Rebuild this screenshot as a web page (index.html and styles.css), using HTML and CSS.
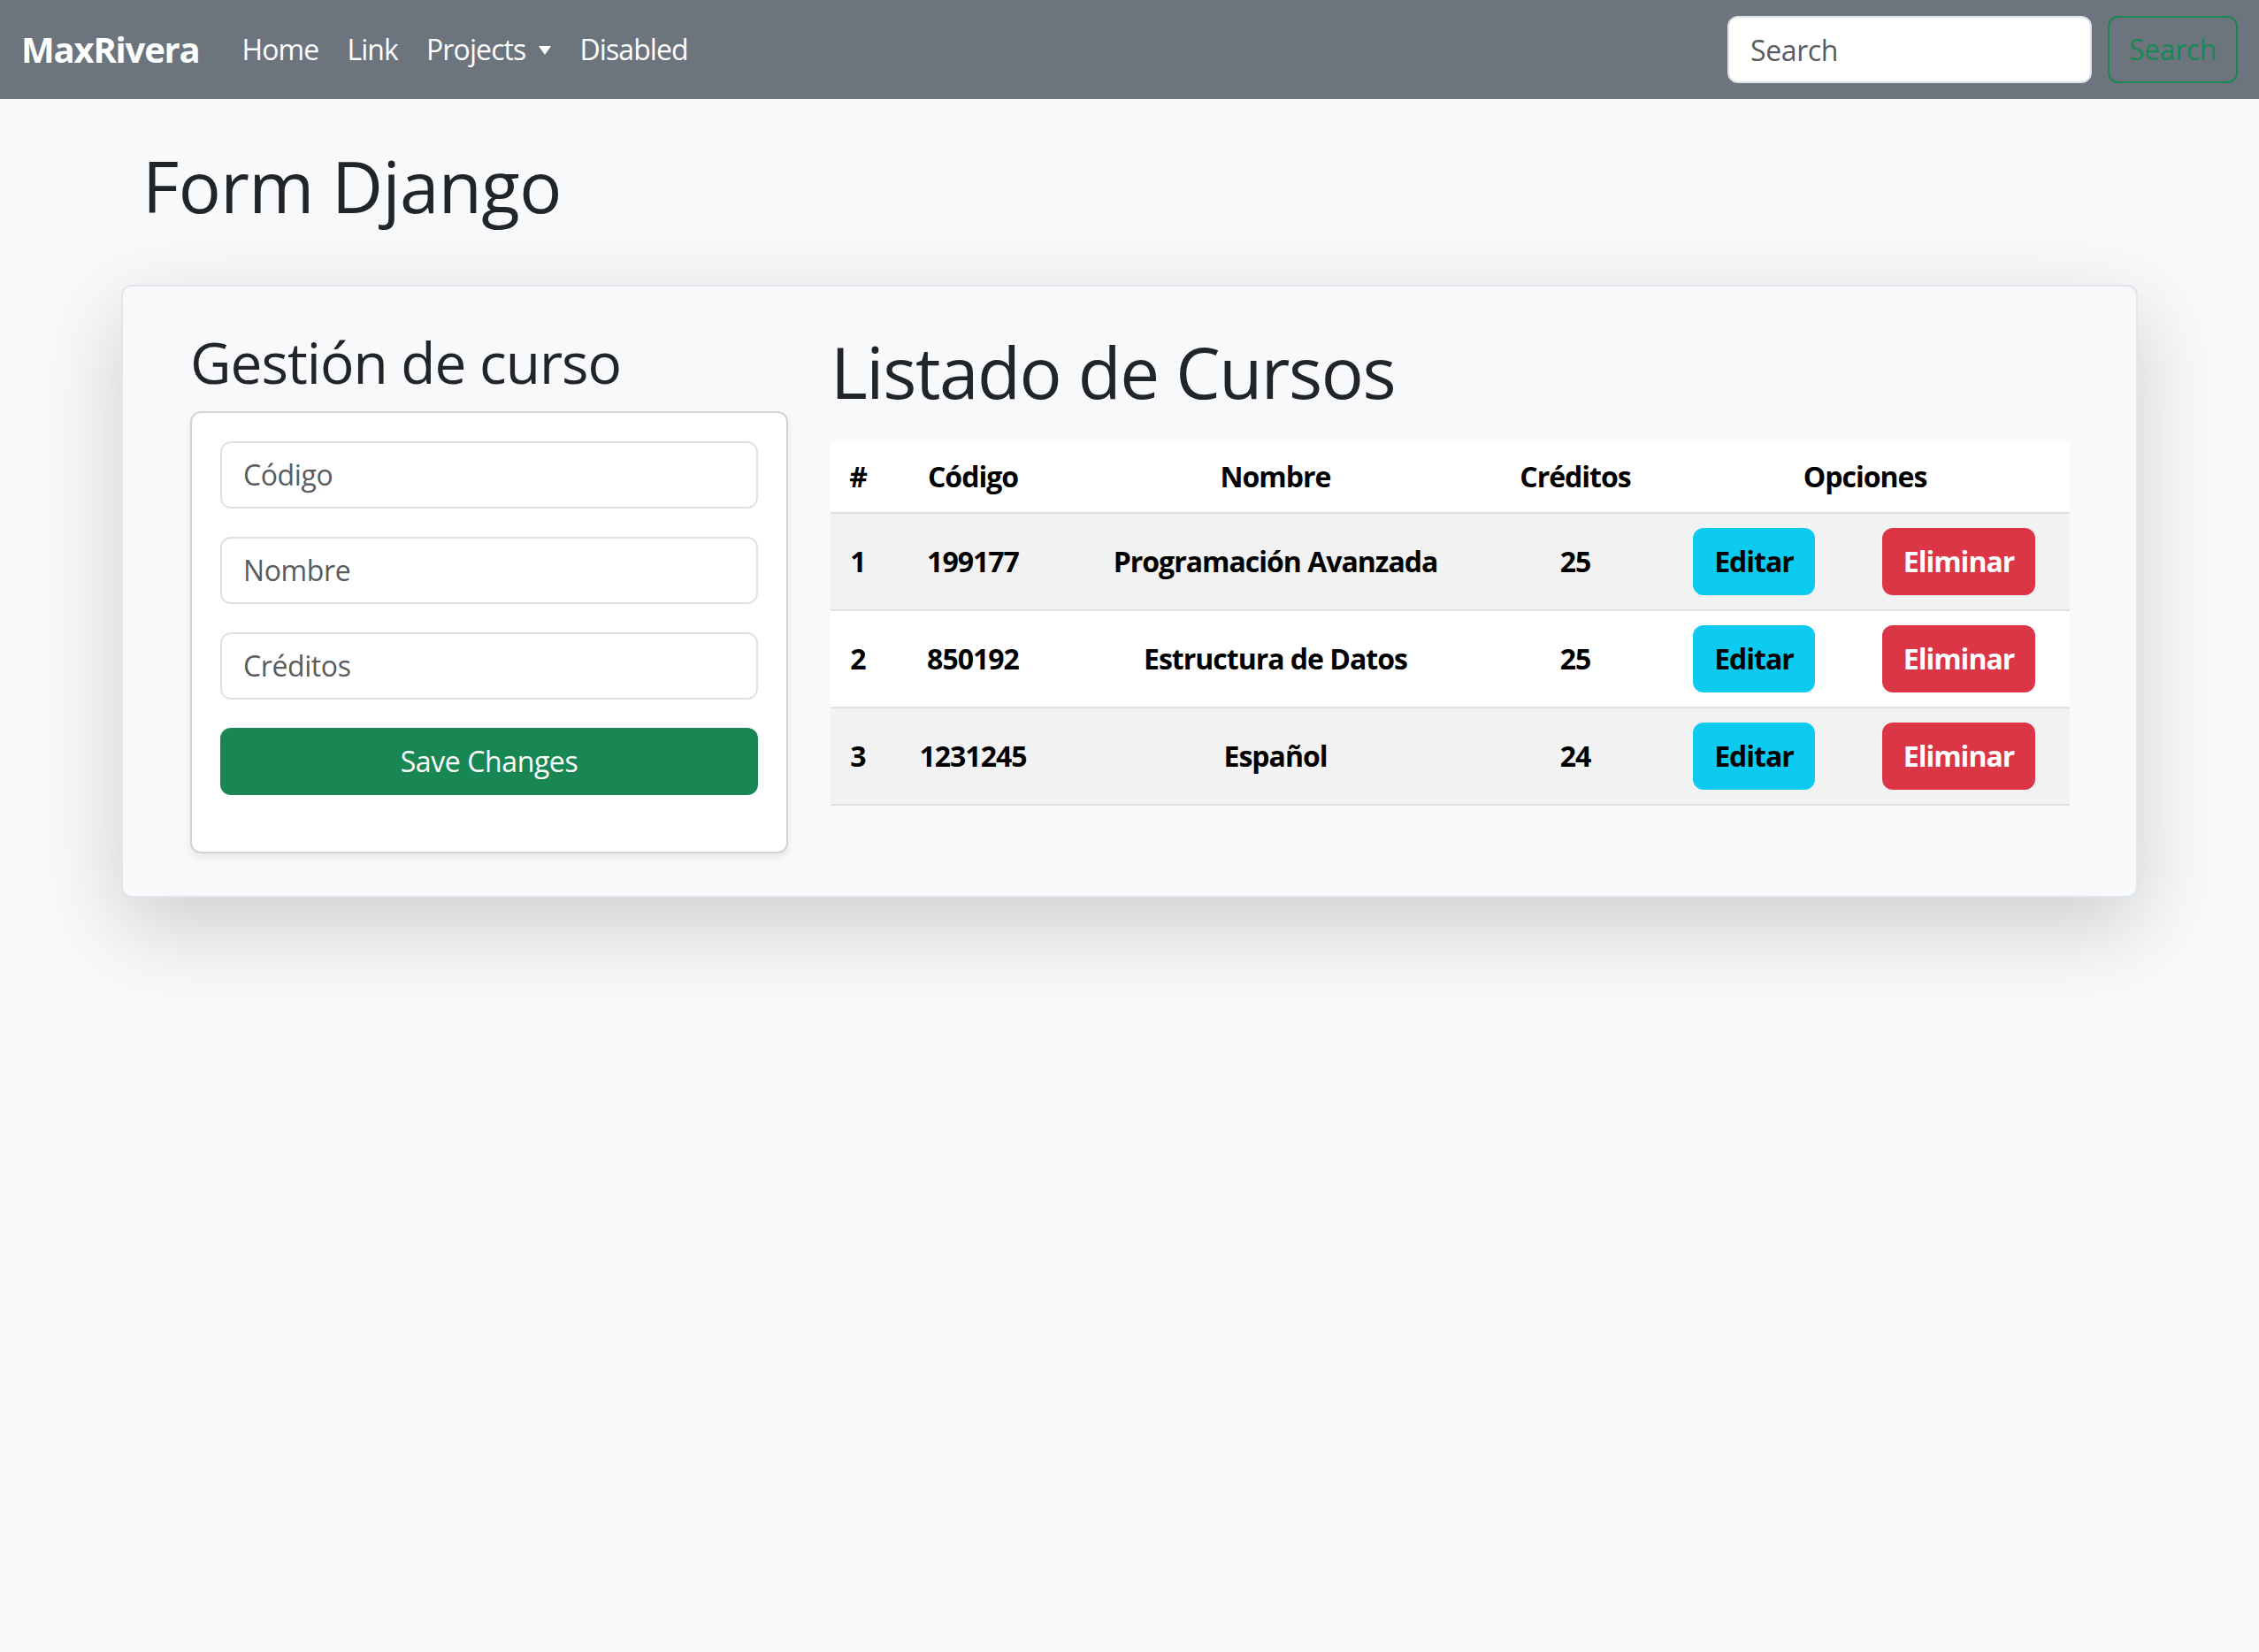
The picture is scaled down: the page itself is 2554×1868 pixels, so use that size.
FILE: index.html
```html
<!DOCTYPE html>
<html lang="es">
<head>
<meta charset="utf-8">
<title>Form Django</title>
<link rel="stylesheet" href="styles.css">
</head>
<body>
<nav class="navbar">
  <div class="nav-left">
    <a class="brand" href="#">MaxRivera</a>
    <ul class="nav-links">
      <li class="nav-link">Home</li>
      <li class="nav-link">Link</li>
      <li class="nav-link">Projects<span class="caret"></span></li>
      <li class="nav-link">Disabled</li>
    </ul>
  </div>
  <form class="search">
    <input class="search-input" type="text" placeholder="Search">
    <button class="search-btn" type="button">Search</button>
  </form>
</nav>

<main class="container">
  <h1 class="page-title">Form Django</h1>
  <div class="card">
    <section class="form-col">
      <h2 class="section-title">Gestión de curso</h2>
      <div class="form-box">
        <input class="field" type="text" placeholder="Código">
        <input class="field" type="text" placeholder="Nombre">
        <input class="field" type="text" placeholder="Créditos">
        <button class="btn-save" type="button">Save Changes</button>
      </div>
    </section>
    <section class="list-col">
      <h1 class="list-title">Listado de Cursos</h1>
      <table class="courses">
        <colgroup>
          <col class="c-num"><col class="c-code"><col class="c-name"><col class="c-cred"><col class="c-edit"><col class="c-del">
        </colgroup>
        <thead>
          <tr><th>#</th><th>Código</th><th>Nombre</th><th>Créditos</th><th colspan="2">Opciones</th></tr>
        </thead>
        <tbody>
          <tr><td>1</td><td>199177</td><td>Programación Avanzada</td><td>25</td><td><button class="btn btn-info">Editar</button></td><td><button class="btn btn-danger">Eliminar</button></td></tr>
          <tr><td>2</td><td>850192</td><td>Estructura de Datos</td><td>25</td><td><button class="btn btn-info">Editar</button></td><td><button class="btn btn-danger">Eliminar</button></td></tr>
          <tr><td>3</td><td>1231245</td><td>Español</td><td>24</td><td><button class="btn btn-info">Editar</button></td><td><button class="btn btn-danger">Eliminar</button></td></tr>
        </tbody>
      </table>
    </section>
  </div>
</main>
</body>
</html>
```
FILE: styles.css
```css
* { box-sizing: border-box; }

html { min-height: 100%; background: #f8f9fa; }

body {
  margin: 0;
  min-height: 100vh;
  background: #f8f9fa;
  font-family: "Open Sans", "Noto Sans", sans-serif;
  font-size: 32px;
  line-height: 1.5;
  letter-spacing: -0.4px;
  color: #212529;
}

/* navbar */
.navbar {
  height: 112px;
  background: #6c757d;
  display: flex;
  align-items: center;
  justify-content: space-between;
  padding: 0 24px;
}
.nav-left { display: flex; align-items: center; }
.brand {
  font-size: 40px;
  font-weight: 700;
  color: #fff;
  text-decoration: none;
  margin-right: 32px;
  letter-spacing: -1.2px;
}
.nav-links { display: flex; list-style: none; margin: 0; padding: 0; }
.nav-link { padding: 16px; color: #fff; letter-spacing: -0.9px; }
.caret {
  display: inline-block;
  margin-left: 15px;
  vertical-align: 6px;
  border-top: 10px solid #fff;
  border-left: 7px solid transparent;
  border-right: 7px solid transparent;
}
.search { display: flex; align-items: center; margin: 0; }
.search-input {
  width: 412px;
  height: 76px;
  margin-right: 18px;
  border: 2px solid #dee2e6;
  border-radius: 12px;
  padding: 0 24px;
  font: inherit;
  letter-spacing: -0.4px;
  color: #212529;
  background: #fff;
}
.search-input::placeholder { color: #595c5f; }
.search-btn {
  height: 76px;
  padding: 0 22px;
  border: 2px solid #198754;
  border-radius: 12px;
  background: transparent;
  color: #198754;
  font: inherit;
  letter-spacing: -0.4px;
}

/* main */
.container { width: 2280px; margin: 0 auto; }
.page-title {
  font-size: 80px;
  font-weight: 500;
  line-height: 1.2;
  letter-spacing: -0.6px;
  margin: 50px 0 64px;
  padding-left: 24px;
}
.card {
  display: grid;
  grid-template-columns: 676px 1fr;
  column-gap: 48px;
  align-items: start;
  padding: 48px 76px;
  border: 2px solid #e2e6ea;
  border-radius: 12px;
  background: #f8f9fa;
  box-shadow: 0 32px 96px rgba(0, 0, 0, 0.175);
}
.section-title {
  font-size: 64px;
  font-weight: 500;
  line-height: 1.2;
  letter-spacing: -1px;
  margin: 0 0 16px;
}
.form-box {
  display: flex;
  flex-direction: column;
  gap: 32px;
  padding: 32px 32px 64px;
  border: 2px solid #d3d3d3;
  border-radius: 12px;
  background: #fff;
  box-shadow: 0 4px 8px rgba(0, 0, 0, 0.075);
}
.field {
  height: 76px;
  border: 2px solid #dee2e6;
  border-radius: 12px;
  padding: 0 24px;
  font: inherit;
  letter-spacing: -0.4px;
  background: #fff;
  color: #212529;
}
.field::placeholder { color: #595c5f; }
.btn-save {
  height: 76px;
  border: none;
  border-radius: 12px;
  background: #198754;
  color: #fff;
  font: inherit;
  letter-spacing: -0.4px;
}
.list-title {
  font-size: 80px;
  font-weight: 500;
  line-height: 1.2;
  letter-spacing: -1.4px;
  margin: 0 0 31px;
}
.courses {
  width: 100%;
  border-collapse: collapse;
  table-layout: fixed;
  color: #000;
}
.c-num { width: 62px; }
.c-code { width: 198px; }
.c-name { width: 486px; }
.c-cred { width: 192px; }
.c-edit { width: 212px; }
.c-del { width: 251px; }
.courses th, .courses td {
  padding: 16px;
  text-align: center;
  vertical-align: middle;
  font-weight: 700;
  letter-spacing: -1px;
  border-bottom: 2px solid #dee2e6;
  white-space: nowrap;
}
.courses thead tr { background: #fff; }
.courses tbody tr { background: #fff; }
.courses tbody tr:nth-child(odd) { background: #f2f2f2; }
.btn {
  height: 76px;
  padding: 0 24px;
  border: none;
  border-radius: 12px;
  font: inherit;
  font-weight: 700;
  letter-spacing: -1px;
}
.btn-info { background: #0dcaf0; color: #000; }
.btn-danger { background: #dc3545; color: #fff; }
```
